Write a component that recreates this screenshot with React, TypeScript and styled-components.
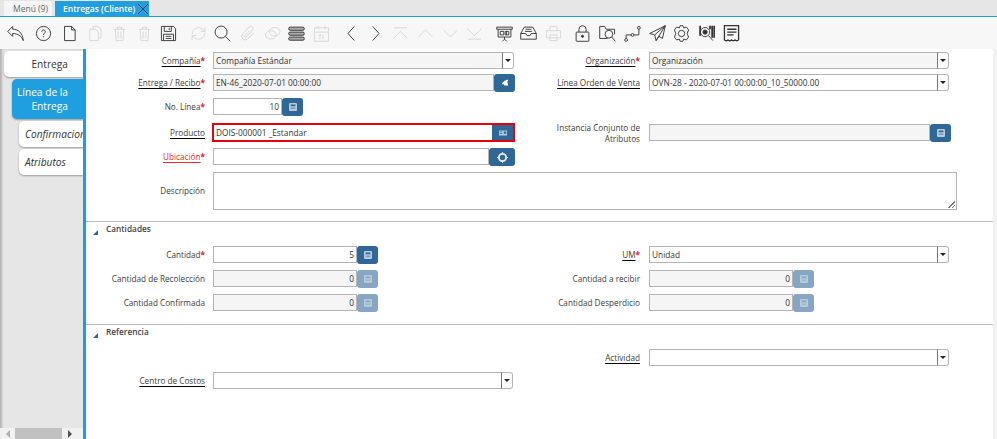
import React from 'react';
import styled, { createGlobalStyle } from 'styled-components';

const GlobalStyle = createGlobalStyle`
	html, body {
		margin: 0;
		padding: 0;
		width: 997px;
		height: 439px;
		overflow: hidden;
		background: #fff;
		font-family: 'Open Sans', 'DejaVu Sans', sans-serif;
	}
	* { box-sizing: border-box; }
`;

const DARK = '#333';
const FADED = '#d6d6d6';

// step = distance from the previous icon's centre
type IconDef = { step: number; faded?: boolean; draw: React.ReactNode };

const toolbarIcons: IconDef[] = [
	{ step: 15, draw: <path d="M1 9 8 2v4c8 0 14 5 15 16-3-7-8-10-15-10v4z" /> },
	{ step: 28, draw: <><circle cx="12" cy="12" r="10" /><path d="M9.500 9.500c0-3.400 5-3.400 5 0 0 2-2.500 2-2.500 4.500M12 16v1.500" /></> },
	{ step: 26, draw: <path d="M5 2h10l5 5v15H5zM15 2v5h5" /> },
	{ step: 26, faded: true, draw: <path d="M9 6V2h7l4 4v12h-4M4 6h8l4 4v12H4z" /> },
	{ step: 24, faded: true, draw: <path d="M4 6h16M9 6V3h6v3M6 6l1 16h10l1-16M10 9v10M14 9v10" /> },
	{ step: 25, faded: true, draw: <path d="M4 6h16M9 6V3h6v3M6 6l1 16h10l1-16M10 9v10M14 9v10" /> },
	{ step: 24, draw: <path d="M2 2h17l3 3v17H2zM6 2v7h10V2M5 22v-9h14v9M13 4v3M8 16h8M8 19h8" /> },
	{ step: 30, faded: true, draw: <path d="M3 13a9 9 0 0 1 15-7l3 3M21 3v6h-6M21 11a9 9 0 0 1-15 7l-3-3M3 21v-6h6" /> },
	{ step: 24, draw: <><circle cx="10" cy="10" r="8.500" /><path d="m16 16 7 7" /></> },
	{ step: 25, faded: true, draw: <path d="m21 11-9 9a5 5 0 0 1-7-7l9-10a3.200 3.200 0 0 1 5 4.500L10 17a1.500 1.500 0 0 1-2-2l7-7" /> },
	{ step: 25, faded: true, draw: <><ellipse cx="9.500" cy="14" rx="7.500" ry="6" /><ellipse cx="15" cy="9.500" rx="7.500" ry="6" /></> },
	{ step: 24, draw: <g fill="#aaa"><rect x="1" y="3" width="22" height="4.500" rx="2" /><rect x="1" y="10" width="22" height="4.500" rx="2" /><rect x="1" y="17" width="22" height="4.500" rx="2" /></g> },
	{ step: 25, faded: true, draw: <><path d="M2 4h20v19H2zM2 10h20M7 1v5M17 1v5" /><path d="M8 14h3l-2 2c2 0 2 4-1 3M14 14v6" /></> },
	{ step: 30, draw: <path d="m16 2-9 10 9 10" /> },
	{ step: 24, draw: <path d="m8 2 9 10-9 10" /> },
	{ step: 25, faded: true, draw: <path d="M2 19 12 9l10 10M3 4h18" /> },
	{ step: 25, faded: true, draw: <path d="m2 17 10-10 10 10" /> },
	{ step: 25, faded: true, draw: <path d="m2 7 10 10L22 7" /> },
	{ step: 24, faded: true, draw: <path d="m2 5 10 10L22 5M3 20h18" /> },
	{ step: 30, draw: <path d="M1 3h22v3H1zM3 6v11h18V6M12 17v3M9 23l3-3 3 3M6 9h5v5H6zM13 9h5v5h-5zM15 9v5" /> },
	{ step: 24, draw: <path d="M6 3h12l5 9v8H1v-8zM1 12h7l2 3h4l2-3h7M8 6h8M7 9h10" /> },
	{ step: 25, faded: true, draw: <path d="M7 8V2h10v6M2 8h20v10H2zM7 14h10v8H7z" /> },
	{ step: 29, draw: <><rect x="3" y="10" width="18" height="13" rx="1" /><path d="M7 10V6a5 5 0 0 1 10 0v4" /><circle cx="12" cy="16" r="1.500" fill="currentColor" /></> },
	{ step: 25, draw: <><path d="M22 13V6H10L8 2H1v17h11" /><circle cx="14" cy="13" r="5.500" /><path d="m18 17 5 6" /></> },
	{ step: 25, draw: <><circle cx="3" cy="21" r="2" /><circle cx="12" cy="14" r="2" /><circle cx="21" cy="4" r="2" /><path d="M3 19v-5h7M14 14h7V6" /></> },
	{ step: 25, draw: <path d="M23 1 1 12l7 2 2 8 4-6 5 3zM23 1 8 14M23 1 10 22" /> },
	{ step: 24, draw: <><circle cx="12" cy="12" r="4.500" /><path d="M10 1h4l1 3 4-1 3 4-2 5 2 5-3 4-4-1-1 3h-4l-1-3-4 1-3-4 2-5-2-5 3-4 4 1z" /></> },
	{ step: 25, draw: <><path d="M3 1v14M20 1v17M23 1v17M17 1v5" strokeWidth="2.500" /><circle cx="10" cy="10" r="6.500" /><circle cx="10" cy="10" r="3" fill="currentColor" /><path d="m15 15 6 7" /></> },
	{ step: 25, draw: <><path d="M2 1h20v20c-2 2-3 2-5 0-2 2-3 2-5 0-2 2-3 2-5 0-2 2-3 2-5 0z" strokeWidth="1.800" /><path d="M6 6h13M6 10h13M6 14h9" strokeWidth="1.800" /></> },
];

const PageFrame = styled.div`
	width: 997px;
	height: 439px;
	display: flex;
	flex-direction: column;
	background: #fff;
`;

const TabStrip = styled.div`
	height: 17px;
	padding: 1px 0 0 4px;
	display: flex;
	gap: 3px;
	background: #e6e6e6;
	border-bottom: 1px solid #1f9ee0;
`;

const WindowTab = styled.div<{ $active?: boolean }>`
	height: 15px;
	width: ${({ $active }) => ($active ? '94px' : '48px')};
	padding-left: ${({ $active }) => ($active ? '8px' : '9px')};
	display: flex;
	align-items: center;
	gap: 3px;
	font-size: 8.500px;
	font-weight: ${({ $active }) => ($active ? 600 : 400)};
	color: ${({ $active }) => ($active ? '#fff' : '#666')};
	background: ${({ $active }) => ($active ? '#1f9ee0' : '#f5f5f5')};
`;

const Toolbar = styled.div`
	height: 32px;
	padding-left: 0;
	display: flex;
	align-items: center;
	background: #f7f7f7;
`;

const ToolSlot = styled.div<{ $step: number; $faded?: boolean }>`
	width: 17px;
	height: 17px;
	margin-left: ${({ $step }) => $step - 17}px;
	color: ${({ $faded }) => ($faded ? FADED : DARK)};
	&:first-child {
		margin-left: 7px;
	}
	svg {
		display: block;
		width: 17px;
		height: 17px;
		fill: none;
		stroke: currentColor;
		stroke-width: 1.300;
	}
`;

const Body = styled.div`
	flex: 1;
	display: flex;
	min-height: 0;
`;

const Sidebar = styled.aside`
	width: 86px;
	display: flex;
	flex-direction: column;
	background: #e6e6e6;
	border-right: 3px solid #1a9ee2;
	box-shadow: inset 2px 0 2px #b5b5b5;
`;

const SideTabs = styled.div`
	flex: 1;
	padding-top: 2px;
	display: flex;
	flex-direction: column;
	align-items: flex-end;
	overflow: hidden;
`;

const SideTab = styled.div<{ $level: number; $active?: boolean }>`
	width: ${({ $level }) => 79 - $level * 7.500}px;
	height: ${({ $active }) => ($active ? 40 : 26)}px;
	margin-bottom: 2px;
	padding: ${({ $level }) => ($level === 2 ? '0 0 0 6px' : '0 15px 0 0')};
	display: flex;
	align-items: center;
	justify-content: ${({ $level }) => ($level === 2 ? 'flex-start' : 'flex-end')};
	text-align: right;
	white-space: ${({ $active }) => ($active ? 'normal' : 'nowrap')};
	overflow: hidden;
	font-size: 10.200px;
	font-style: ${({ $level }) => ($level === 2 ? 'italic' : 'normal')};
	line-height: 14px;
	color: ${({ $active }) => ($active ? '#fff' : '#333')};
	background: ${({ $active }) => ($active ? '#1f9ee0' : '#fff')};
	border-radius: 5px 0 0 5px;
	box-shadow: 0 1px 2px #9a9a9a;
`;

const SideScroll = styled.div`
	height: 11px;
	display: flex;
	align-items: center;
	background: #f1f1f1;
`;

const ScrollArrow = styled.div<{ $dir: 'left' | 'right' }>`
	width: 15px;
	display: flex;
	justify-content: center;
	&::before {
		content: '';
		border-top: 4px solid transparent;
		border-bottom: 4px solid transparent;
		${({ $dir }) =>
			$dir === 'left' ? 'border-right: 4px solid #b0b0b0;' : 'border-left: 4px solid #505050;'}
	}
`;

const ScrollThumb = styled.div`
	width: 47px;
	height: 11px;
	background: #c1c1c1;
`;

const Content = styled.main`
	flex: 1;
	padding-top: 3px;
	border-right: 4px solid #f1f1f1;
	min-width: 0;
`;

const FormGrid = styled.div<{ $rows: string }>`
	display: grid;
	grid-template-columns: 119px 310px 125px 317px;
	grid-template-rows: ${({ $rows }) => $rows};
	align-items: start;
`;

const Spacer = styled.div<{ $from: number }>`
	grid-column: ${({ $from }) => $from} / span 2;
`;

const Label = styled.div<{ $col: number; $kind?: 'link' | 'error'; $tall?: boolean }>`
	grid-column: ${({ $col }) => $col};
	height: ${({ $tall }) => ($tall ? 37 : 17)}px;
	display: flex;
	align-items: center;
	justify-content: flex-end;
	text-align: right;
	font-size: 8.200px;
	line-height: 11px;
	color: ${({ $kind }) => ($kind === 'error' ? '#ee2a2a' : '#3c3c3c')};
	span {
		max-width: 100px;
		text-decoration: ${({ $kind }) => ($kind ? 'underline' : 'none')};
		text-decoration-color: ${({ $kind }) => ($kind === 'error' ? '#ee2a2a' : '#000')};
		text-underline-offset: 2px;
	}
	b {
		color: #e0202a;
		font-weight: 700;
	}
`;

const FieldCell = styled.div<{ $col: number; $span?: number }>`
	grid-column: ${({ $col, $span }) => ($span ? `${$col} / span ${$span}` : $col)};
	padding-left: ${({ $col }) => ($col === 4 ? 9 : 8)}px;
	display: flex;
	height: 17px;
`;

const Input = styled.div<{ $w: number; $ro?: boolean; $num?: boolean }>`
	width: ${({ $w }) => $w}px;
	height: 17px;
	padding: 0 2px;
	display: flex;
	align-items: center;
	justify-content: ${({ $num }) => ($num ? 'flex-end' : 'flex-start')};
	font-size: 8.300px;
	color: #333;
	white-space: nowrap;
	background: ${({ $ro }) => ($ro ? '#f5f5f5' : '#fff')};
	border: 1px solid #b4b4b4;
`;

const RedBox = styled.div`
	width: 303px;
	height: 19px;
	margin: -1px 0 0 -1px;
	display: flex;
	border: 2px solid #e8000b;
	font-size: 8.300px;
	color: #333;
	span {
		flex: 1;
		padding-left: 2px;
		line-height: 15px;
	}
`;

const Combo = styled.div`
	width: 12px;
	height: 17px;
	flex: none;
	display: flex;
	align-items: center;
	justify-content: center;
	background: #fff;
	border: 1px solid #b4b4b4;
	border-left: 1px solid #777;
	border-radius: 0 3px 3px 0;
	margin-left: -1px;
	&::before {
		content: '';
		border-left: 3px solid transparent;
		border-right: 3px solid transparent;
		border-top: 3px solid #222;
	}
`;

const Action = styled.div<{ $w?: number; $off?: boolean; $flat?: boolean }>`
	width: ${({ $w }) => $w ?? 21}px;
	height: ${({ $flat }) => ($flat ? 15 : 18)}px;
	flex: none;
	display: flex;
	align-items: center;
	justify-content: center;
	color: #b8cbdc;
	background: ${({ $off }) => ($off ? '#86a6c3' : '#2f6897')};
	border-radius: ${({ $flat }) => ($flat ? 0 : 3)}px;
	svg {
		width: 8px;
		height: 8px;
		fill: currentColor;
	}
`;

const DescBox = styled.div`
	width: 744px;
	height: 38px;
	flex: none;
	background: #fff;
	border: 1px solid #b4b4b4;
	position: relative;
	&::after {
		content: '';
		position: absolute;
		right: 1px;
		bottom: 1px;
		width: 7px;
		height: 7px;
		background: linear-gradient(135deg, transparent 50%, #777 50%, #777 58%, transparent 58%, transparent 74%, #777 74%, #777 82%, transparent 82%);
	}
`;

const SectionHead = styled.div<{ $gap: number }>`
	margin-top: ${({ $gap }) => $gap}px;
	padding: 1px 0 0 7px;
	height: 25px;
	display: flex;
	align-items: flex-start;
	gap: 8px;
	font-size: 8.300px;
	font-weight: 600;
	line-height: 12px;
	color: #444;
	border-top: 1px solid #bdbdbd;
	i {
		margin-top: 7px;
		width: 0;
		height: 0;
		border-left: 5px solid transparent;
		border-bottom: 5px solid #2f6897;
	}
`;

const CalcIcon = () => (
	<svg viewBox="0 0 10 10"><path d="M1 0h8l1 1v8l-1 1H1L0 9V1zM2 2v2h6V2zM2 6v1h6V6z" fillRule="evenodd" /></svg>
);

const CardIcon = () => (
	<svg viewBox="0 0 10 10"><path d="M0 2h10v6H0zM1 3v1h3V3zM1 5v1h3V5zM6 3v3h3V3z" fillRule="evenodd" /></svg>
);

const ArrowIcon = () => (
	<svg viewBox="0 0 10 10" style={{ color: '#fff' }}><path d="M1 7C2 3 6 1 9 1L8 4l1 4H4l-1-2z" /></svg>
);

const TargetIcon = () => (
	<svg viewBox="0 0 12 12" style={{ width: 11, height: 11, color: '#e6edf3' }}>
		<path d="M6 1a5 5 0 1 1 0 10A5 5 0 0 1 6 1m0 2a3 3 0 1 0 0 6 3 3 0 0 0 0-6" fillRule="evenodd" />
		<path d="M5.500 0h1v3h-1zM5.500 9h1v3h-1zM0 5.500h3v1H0zM9 5.500h3v1H9z" />
	</svg>
);

const Req = () => <b>*</b>;

function Amount({ col, label, value }: { col: number; label: string; value: string }) {
	return (
		<>
			<Label $col={col}><span>{label}</span></Label>
			<FieldCell $col={col + 1}>
				<Input $w={144} $ro $num>{value}</Input>
				<Action $off><CalcIcon /></Action>
			</FieldCell>
		</>
	);
}

export default function App() {
	return (
		<PageFrame>
			<GlobalStyle />
			<TabStrip>
				<WindowTab>Menú (9)</WindowTab>
				<WindowTab $active>
					Entregas (Cliente)
					<svg width="10" height="10" viewBox="0 0 10 10" stroke="#17405f" strokeWidth="1"><path d="m0 0 10 10M10 0 0 10" /></svg>
				</WindowTab>
			</TabStrip>
			<Toolbar>
				{toolbarIcons.map((icon, i) => (
					<ToolSlot key={i} $step={icon.step} $faded={icon.faded}>
						<svg viewBox="0 0 24 24">{icon.draw}</svg>
					</ToolSlot>
				))}
			</Toolbar>
			<Body>
				<Sidebar>
					<SideTabs>
						<SideTab $level={0}>Entrega</SideTab>
						<SideTab $level={1} $active>Línea de la Entrega</SideTab>
						<SideTab $level={2}>Confirmacion</SideTab>
						<SideTab $level={2}>Atributos</SideTab>
					</SideTabs>
					<SideScroll>
						<ScrollArrow $dir="left" />
						<ScrollThumb />
						<ScrollArrow $dir="right" />
					</SideScroll>
				</Sidebar>
				<Content>
					<FormGrid $rows="22px 24px 26px 24px 24px 38px">
						<Label $col={1} $kind="link"><span>Compañía</span><Req /></Label>
						<FieldCell $col={2}><Input $w={290} $ro>Compañía Estándar</Input><Combo /></FieldCell>
						<Label $col={3} $kind="link"><span>Organización</span><Req /></Label>
						<FieldCell $col={4}><Input $w={289} $ro>Organización</Input><Combo /></FieldCell>

						<Label $col={1} $kind="link"><span>Entrega / Recibo</span><Req /></Label>
						<FieldCell $col={2}><Input $w={281} $ro>EN-46_2020-07-01 00:00:00</Input><Action><ArrowIcon /></Action></FieldCell>
						<Label $col={3} $kind="link"><span>Línea Orden de Venta</span></Label>
						<FieldCell $col={4}><Input $w={289}>OVN-28 - 2020-07-01 00:00:00_10_50000.00</Input><Combo /></FieldCell>

						<Label $col={1}><span>No. Línea</span><Req /></Label>
						<FieldCell $col={2}><Input $w={69} $num>10</Input><Action><CalcIcon /></Action></FieldCell>
						<Spacer $from={3} />

						<Label $col={1} $kind="link"><span>Producto</span></Label>
						<FieldCell $col={2}><RedBox><span>DOIS-000001 _Estandar</span><Action $flat><CardIcon /></Action></RedBox></FieldCell>
						<Label $col={3}><span>Instancia Conjunto de Atributos</span></Label>
						<FieldCell $col={4}><Input $w={281} $ro /><Action><CalcIcon /></Action></FieldCell>

						<Label $col={1} $kind="error"><span>Ubicación</span><Req /></Label>
						<FieldCell $col={2}><Input $w={276} /><Action $w={26}><TargetIcon /></Action></FieldCell>
						<Spacer $from={3} />

						<Label $col={1} $tall><span>Descripción</span></Label>
						<FieldCell $col={2} $span={3}><DescBox /></FieldCell>
					</FormGrid>
					<SectionHead $gap={11}><i />Cantidades</SectionHead>
					<FormGrid $rows="24px 24px 24px">
						<Label $col={1}><span>Cantidad</span><Req /></Label>
						<FieldCell $col={2}><Input $w={144} $num>5</Input><Action><CalcIcon /></Action></FieldCell>
						<Label $col={3} $kind="link"><span>UM</span><Req /></Label>
						<FieldCell $col={4}><Input $w={289}>Unidad</Input><Combo /></FieldCell>
						<Amount col={1} label="Cantidad de Recolección" value="0" />
						<Amount col={3} label="Cantidad a recibir" value="0" />
						<Amount col={1} label="Cantidad Confirmada" value="0" />
						<Amount col={3} label="Cantidad Desperdicio" value="0" />
					</FormGrid>
					<SectionHead $gap={6}><i />Referencia</SectionHead>
					<FormGrid $rows="23px 23px">
						<Spacer $from={1} />
						<Label $col={3} $kind="link"><span>Actividad</span></Label>
						<FieldCell $col={4}><Input $w={289} /><Combo /></FieldCell>
						<Label $col={1} $kind="link"><span>Centro de Costos</span></Label>
						<FieldCell $col={2}><Input $w={289} /><Combo /></FieldCell>
					</FormGrid>
				</Content>
			</Body>
		</PageFrame>
	);
}
